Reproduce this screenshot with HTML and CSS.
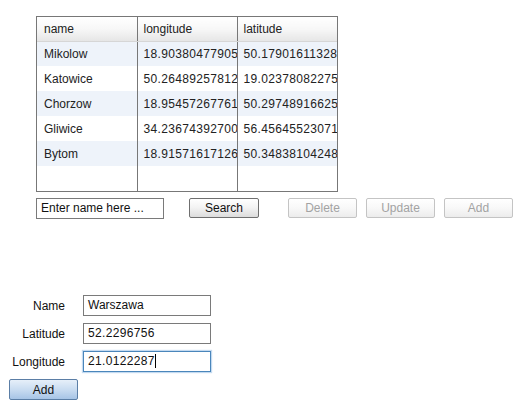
FILE: index.html
```html
<!DOCTYPE html>
<html>
<head>
<meta charset="utf-8">
<link rel="stylesheet" href="styles.css">
</head>
<body>
<div class="grid-box">
  <table class="grid">
    <colgroup><col class="c1"><col class="c2"><col class="c3"></colgroup>
    <thead>
      <tr><th>name</th><th>longitude</th><th>latitude</th></tr>
    </thead>
    <tbody>
      <tr class="alt"><td>Mikolow</td><td class="num">18.90380477905</td><td class="num">50.17901611328</td></tr>
      <tr><td>Katowice</td><td class="num">50.26489257812</td><td class="num">19.02378082275</td></tr>
      <tr class="alt"><td>Chorzow</td><td class="num">18.95457267761</td><td class="num">50.29748916625</td></tr>
      <tr><td>Gliwice</td><td class="num">34.23674392700</td><td class="num">56.45645523071</td></tr>
      <tr class="alt"><td>Bytom</td><td class="num">18.91571617126</td><td class="num">50.34838104248</td></tr>
      <tr class="filler"><td></td><td></td><td></td></tr>
    </tbody>
  </table>
</div>

<div class="controls">
  <div class="field search-field">Enter name here ...</div>
  <button class="btn search">Search</button>
  <button class="btn disabled delete">Delete</button>
  <button class="btn disabled update">Update</button>
  <button class="btn disabled add-top">Add</button>
</div>

<div class="form">
  <div class="form-row">
    <span class="label">Name</span>
    <div class="field wide">Warszawa</div>
  </div>
  <div class="form-row">
    <span class="label">Latitude</span>
    <div class="field wide num">52.2296756</div>
  </div>
  <div class="form-row">
    <span class="label">Longitude</span>
    <div class="field wide num focused">21.0122287<span class="caret"></span></div>
  </div>
  <button class="btn primary">Add</button>
</div>
</body>
</html>
```
FILE: styles.css
```css
* { box-sizing: border-box; }

html, body {
  margin: 0;
  padding: 0;
  background: #ffffff;
}

body {
  font-family: "Liberation Sans", Arial, sans-serif;
  font-size: 12px;
  color: #222222;
  padding-top: 16px;
  width: 529px;
  height: 412px;
  overflow: hidden;
}

.grid-box {
  margin-left: 36px;
  width: 302px;
  border: 1px solid #777777;
}

.grid {
  border-collapse: collapse;
  table-layout: fixed;
  width: 300px;
}

.grid col.c1 { width: 100px; }
.grid col.c2 { width: 100px; }
.grid col.c3 { width: 100px; }

.grid th,
.grid td {
  padding: 0 0 0 6px;
  white-space: nowrap;
  overflow: hidden;
  text-overflow: clip;
  text-align: left;
  font-weight: normal;
  border-left: 1px solid #777777;
}

.grid th:first-child,
.grid td:first-child {
  border-left: none;
  padding-left: 7px;
}

.grid th {
  height: 24px;
  background: linear-gradient(#ffffff 0%, #f7f7f7 50%, #e6e6e6 100%);
  border-bottom: 1px solid #d6d6d6;
  color: #222222;
}

.grid td {
  height: 25px;
}

.grid tr.alt td {
  background: #eef3fa;
}

.num {
  letter-spacing: 0.33px;
}

.controls {
  display: flex;
  align-items: flex-start;
  margin-top: 6px;
  padding-left: 36px;
}

.field {
  height: 21px;
  border: 1px solid #7a7a7a;
  background: #ffffff;
  padding: 0 0 0 4px;
  line-height: 19px;
  color: #111111;
  white-space: nowrap;
}

.search-field {
  width: 128px;
}

.btn {
  font-family: "Liberation Sans", Arial, sans-serif;
  font-size: 12px;
  height: 20px;
  width: 70px;
  padding: 0;
  border: 1px solid #6f6f6f;
  border-radius: 2px;
  background: linear-gradient(#ffffff 0%, #f2f2f2 50%, #dcdcdc 100%);
  color: #111111;
  line-height: 18px;
}

.search { margin-left: 25px; }
.delete { margin-left: 29px; width: 69px; }
.update { margin-left: 9px; width: 69px; }
.add-top { margin-left: 9px; width: 69px; }

.btn.disabled {
  border-color: #c4c4c4;
  color: #a3a3a3;
  background: linear-gradient(#ffffff 0%, #f8f8f8 50%, #ececec 100%);
}

.form {
  margin-top: 76px;
  display: flex;
  flex-direction: column;
  align-items: flex-start;
  gap: 7px;
}

.form-row {
  display: flex;
  align-items: center;
  gap: 18px;
}

.label {
  width: 65px;
  text-align: right;
  color: #111111;
}

.field.wide {
  width: 128px;
}

.field.focused {
  border-color: #4a86bb;
  box-shadow: 0 0 1px 1px #c4daf0;
}

.caret {
  display: inline-block;
  width: 1px;
  height: 14px;
  background: #000000;
  vertical-align: -3px;
  margin-left: 0;
}

.btn.primary {
  margin-left: 9px;
  width: 69px;
  height: 21px;
  border-color: #5b7ea6;
  background: linear-gradient(#e6eff9 0%, #c9dcf1 50%, #a7c4e6 100%);
  color: #111111;
}
```
